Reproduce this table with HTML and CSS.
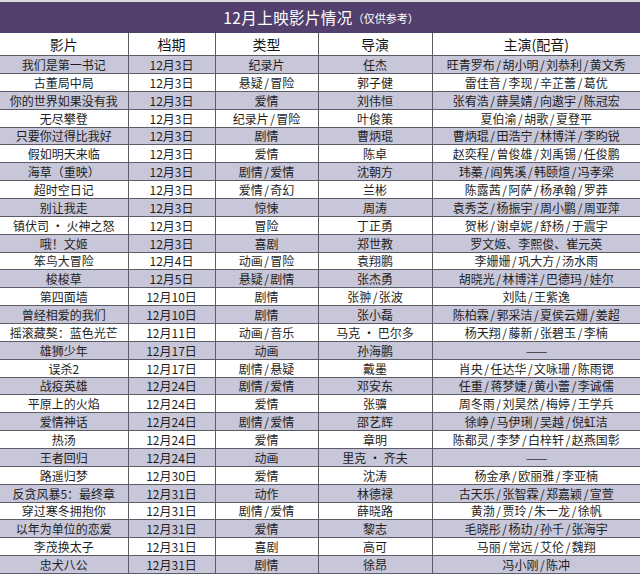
FILE: index.html
```html
<!DOCTYPE html>
<html lang="zh">
<head>
<meta charset="utf-8">
<title>12月上映影片情况</title>
<link rel="stylesheet" href="styles.css">
</head>
<body>
<div class="sheet">
  <div class="title"><span class="main">12月上映影片情况</span><span class="note">（仅供参考）</span></div>
  <table class="films">
    <colgroup><col class="w1"><col class="w2"><col class="w3"><col class="w4"><col class="w5"></colgroup>
    <thead>
      <tr><th>影片</th><th>档期</th><th>类型</th><th>导演</th><th>主演(配音)</th></tr>
    </thead>
    <tbody>
      <tr><td>我们是第一书记</td><td>12月3日</td><td>纪录片</td><td>任杰</td><td>旺青罗布<span class="s">/</span>胡小明<span class="s">/</span>刘恭利<span class="s">/</span>黄文秀</td></tr>
      <tr><td>古董局中局</td><td>12月3日</td><td>悬疑<span class="s">/</span>冒险</td><td>郭子健</td><td>雷佳音<span class="s">/</span>李现<span class="s">/</span>辛芷蕾<span class="s">/</span>葛优</td></tr>
      <tr><td>你的世界如果没有我</td><td>12月3日</td><td>爱情</td><td>刘伟恒</td><td>张宥浩<span class="s">/</span>薛昊婧<span class="s">/</span>向遨宇<span class="s">/</span>陈冠宏</td></tr>
      <tr><td>无尽攀登</td><td>12月3日</td><td>纪录片<span class="s">/</span>冒险</td><td>叶俊策</td><td>夏伯渝<span class="s">/</span>胡歌<span class="s">/</span>夏登平</td></tr>
      <tr><td>只要你过得比我好</td><td>12月3日</td><td>剧情</td><td>曹炳琨</td><td>曹炳琨<span class="s">/</span>田浩宁<span class="s">/</span>林博洋<span class="s">/</span>李昀锐</td></tr>
      <tr><td>假如明天来临</td><td>12月3日</td><td>爱情</td><td>陈卓</td><td>赵奕程<span class="s">/</span>曾俊雄<span class="s">/</span>刘禹锡<span class="s">/</span>任俊鹏</td></tr>
      <tr><td>海草（重映）</td><td>12月3日</td><td>剧情<span class="s">/</span>爱情</td><td>沈朝方</td><td>玮蓁<span class="s">/</span>阎隽溪<span class="s">/</span>韩颐煊<span class="s">/</span>冯孝梁</td></tr>
      <tr><td>超时空日记</td><td>12月3日</td><td>爱情<span class="s">/</span>奇幻</td><td>兰彬</td><td>陈露茜<span class="s">/</span>阿萨<span class="s">/</span>杨承翰<span class="s">/</span>罗莽</td></tr>
      <tr><td>别让我走</td><td>12月3日</td><td>惊悚</td><td>周涛</td><td>袁秀芝<span class="s">/</span>杨振宇<span class="s">/</span>周小鹏<span class="s">/</span>周亚萍</td></tr>
      <tr><td>镇伏司 · 火神之怒</td><td>12月3日</td><td>冒险</td><td>丁正勇</td><td>贺彬<span class="s">/</span>谢卓妮<span class="s">/</span>舒杨<span class="s">/</span>于震宇</td></tr>
      <tr><td>哦！文姬</td><td>12月3日</td><td>喜剧</td><td>郑世教</td><td>罗文姬、李熙俊、崔元英</td></tr>
      <tr><td>笨鸟大冒险</td><td>12月4日</td><td>动画<span class="s">/</span>冒险</td><td>袁翔鹏</td><td>李姗姗<span class="s">/</span>巩大方<span class="s">/</span>汤水雨</td></tr>
      <tr><td>梭梭草</td><td>12月5日</td><td>悬疑<span class="s">/</span>剧情</td><td>张杰勇</td><td>胡晓光<span class="s">/</span>林博洋<span class="s">/</span>巴德玛<span class="s">/</span>娃尔</td></tr>
      <tr><td>第四面墙</td><td>12月10日</td><td>剧情</td><td>张翀<span class="s">/</span>张波</td><td>刘陆<span class="s">/</span>王紫逸</td></tr>
      <tr><td>曾经相爱的我们</td><td>12月10日</td><td>剧情</td><td>张小磊</td><td>陈柏霖<span class="s">/</span>郭采洁<span class="s">/</span>夏侯云姗<span class="s">/</span>姜超</td></tr>
      <tr><td>摇滚藏獒：蓝色光芒</td><td>12月11日</td><td>动画<span class="s">/</span>音乐</td><td>马克 · 巴尔多</td><td>杨天翔<span class="s">/</span>藤新<span class="s">/</span>张碧玉<span class="s">/</span>李楠</td></tr>
      <tr><td>雄狮少年</td><td>12月17日</td><td>动画</td><td>孙海鹏</td><td><span class="dash">——</span></td></tr>
      <tr><td>误杀2</td><td>12月17日</td><td>剧情<span class="s">/</span>悬疑</td><td>戴墨</td><td>肖央<span class="s">/</span>任达华<span class="s">/</span>文咏珊<span class="s">/</span>陈雨锶</td></tr>
      <tr><td>战疫英雄</td><td>12月24日</td><td>剧情<span class="s">/</span>爱情</td><td>邓安东</td><td>任重<span class="s">/</span>蒋梦婕<span class="s">/</span>黄小蕾<span class="s">/</span>李诚儒</td></tr>
      <tr><td>平原上的火焰</td><td>12月24日</td><td>爱情</td><td>张骥</td><td>周冬雨<span class="s">/</span>刘昊然<span class="s">/</span>梅婷<span class="s">/</span>王学兵</td></tr>
      <tr><td>爱情神话</td><td>12月24日</td><td>剧情<span class="s">/</span>爱情</td><td>邵艺辉</td><td>徐峥<span class="s">/</span>马伊琍<span class="s">/</span>吴越<span class="s">/</span>倪虹洁</td></tr>
      <tr><td>热汤</td><td>12月24日</td><td>爱情</td><td>章明</td><td>陈都灵<span class="s">/</span>李梦<span class="s">/</span>白梓轩<span class="s">/</span>赵燕国彰</td></tr>
      <tr><td>王者回归</td><td>12月24日</td><td>动画</td><td>里克 · 齐夫</td><td><span class="dash">——</span></td></tr>
      <tr><td>路遥归梦</td><td>12月30日</td><td>爱情</td><td>沈涛</td><td>杨金承<span class="s">/</span>欧丽雅<span class="s">/</span>李亚楠</td></tr>
      <tr><td>反贪风暴5：最终章</td><td>12月31日</td><td>动作</td><td>林德禄</td><td>古天乐<span class="s">/</span>张智霖<span class="s">/</span>郑嘉颖<span class="s">/</span>宣萱</td></tr>
      <tr><td>穿过寒冬拥抱你</td><td>12月31日</td><td>剧情<span class="s">/</span>爱情</td><td>薛晓路</td><td>黄渤<span class="s">/</span>贾玲<span class="s">/</span>朱一龙<span class="s">/</span>徐帆</td></tr>
      <tr><td>以年为单位的恋爱</td><td>12月31日</td><td>爱情</td><td>黎志</td><td>毛晓彤<span class="s">/</span>杨玏<span class="s">/</span>孙千<span class="s">/</span>张海宇</td></tr>
      <tr><td>李茂换太子</td><td>12月31日</td><td>喜剧</td><td>高可</td><td>马丽<span class="s">/</span>常远<span class="s">/</span>艾伦<span class="s">/</span>魏翔</td></tr>
      <tr><td>忠犬八公</td><td>12月31日</td><td>剧情</td><td>徐昂</td><td>冯小刚<span class="s">/</span>陈冲</td></tr>
    </tbody>
  </table>
</div>
</body>
</html>
```

FILE: styles.css
```css
html, body {
  margin: 0;
  padding: 0;
  background: #ffffff;
}

body {
  font-family: "Noto Sans CJK SC", "Noto Sans", sans-serif;
  color: #1c1c1c;
}

.sheet {
  width: 640px;
  height: 574px;
  overflow: hidden;
  display: flex;
  flex-direction: column;
}

.title {
  height: 31px;
  border-top: 2px solid #dcdce0;
  background: #523f6d;
  color: #ffffff;
  display: flex;
  align-items: center;
  justify-content: center;
  padding-left: 2px;
}

.title .main {
  font-size: 15.5px;
  letter-spacing: 0.4px;
}

.title .note {
  font-size: 11px;
  margin-top: 1px;
}

.films {
  width: 640px;
  border-collapse: collapse;
  table-layout: fixed;
}

.w1 { width: 128px; }
.w2 { width: 87px; }
.w3 { width: 103px; }
.w4 { width: 114px; }
.w5 { width: 208px; }

.films th,
.films td {
  padding: 0;
  text-align: center;
  white-space: nowrap;
  border: 1px solid #5c5c66;
}

.films th:first-child,
.films td:first-child {
  border-left: none;
}

.films th:last-child,
.films td:last-child {
  border-right: none;
}

.films thead tr {
  height: 23px;
}

.films th {
  font-size: 14px;
  font-weight: 400;
  line-height: 18px;
  color: #161616;
  background: #ffffff;
  border-top: none;
}

.films tbody tr {
  height: 17.86px;
}

.films td {
  font-size: 12px;
  line-height: 15px;
  color: #1e1e1e;
}

.films tbody tr:nth-child(odd) td {
  background: #c8c6d9;
}

.films tbody tr:nth-child(even) td {
  background: #ffffff;
}

.s {
  display: inline-block;
  margin: 0 1.5px;
}

.dash {
  font-size: 13px;
  line-height: 13px;
  letter-spacing: -1px;
  color: #333;
}
```
